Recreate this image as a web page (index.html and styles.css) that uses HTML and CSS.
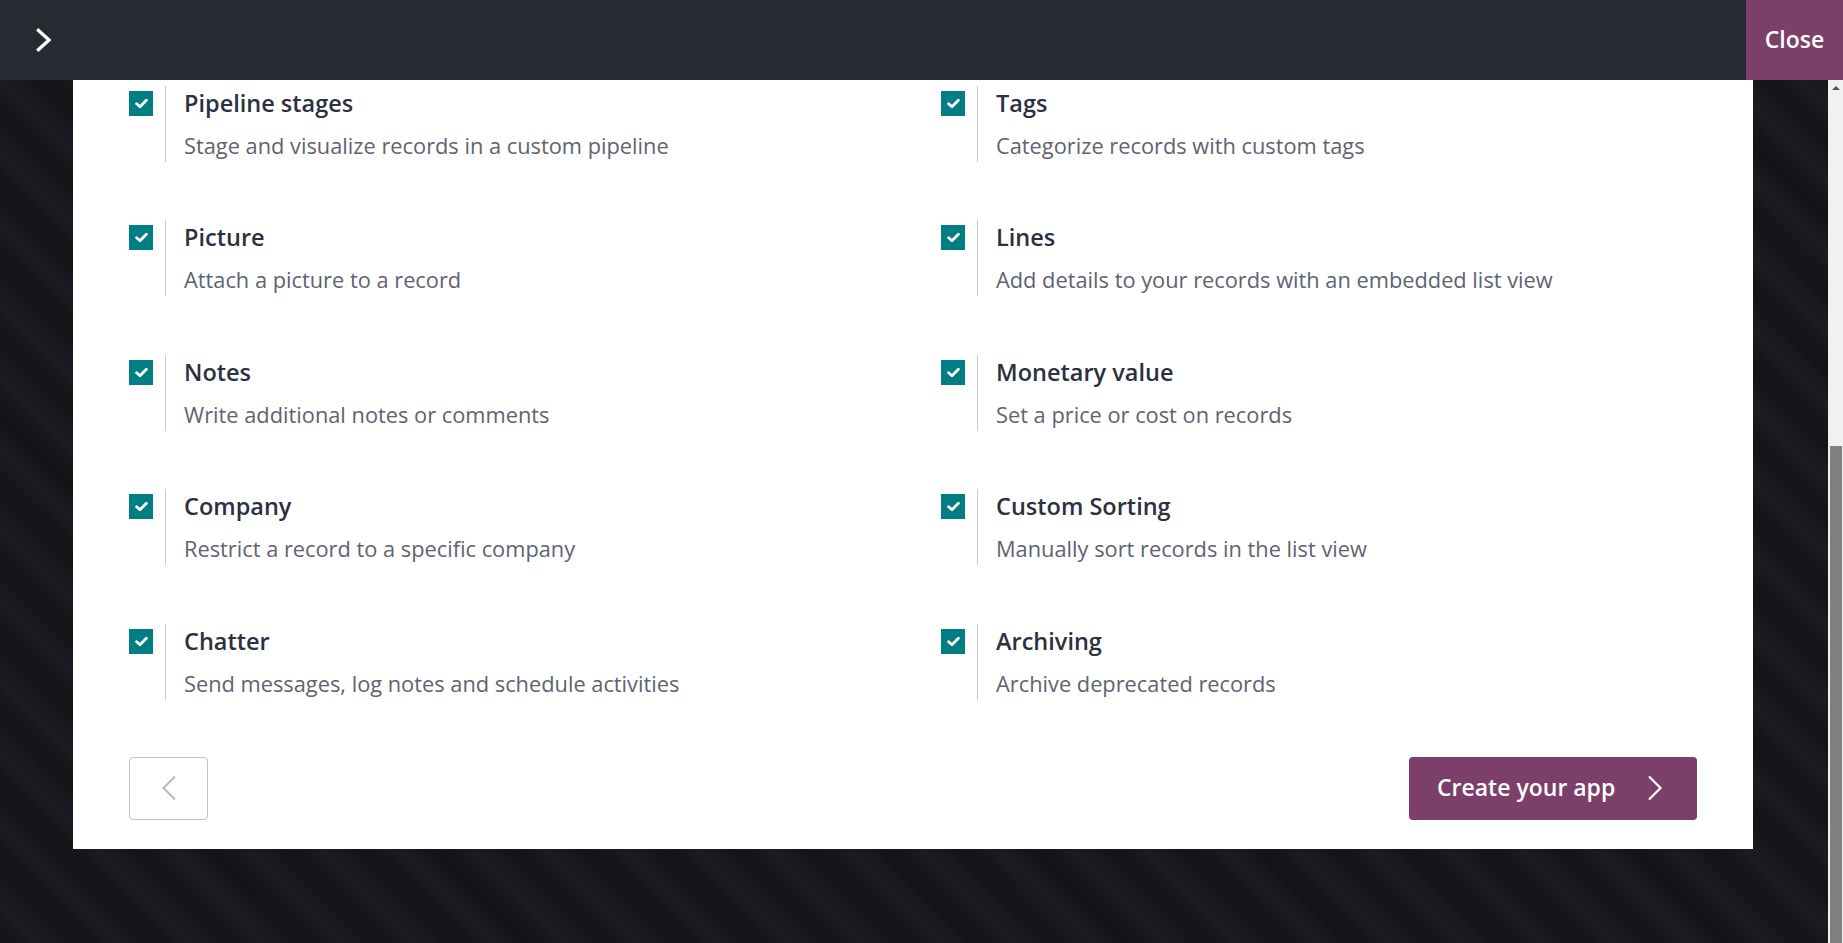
FILE: index.html
```html
<!DOCTYPE html>
<html lang="en">
<head>
<meta charset="utf-8">
<title>Create your app</title>
<link rel="stylesheet" href="styles.css">
</head>
<body>
<header class="topbar">
  <button class="topbar-toggle" aria-label="Expand">
    <svg width="16" height="24" viewBox="0 0 16 24"><path d="M2.5 2.5 L13 12 L2.5 21.5" fill="none" stroke="#fff" stroke-width="3.4" stroke-linecap="square" stroke-linejoin="miter"/></svg>
  </button>
  <button class="close-btn">Close</button>
</header>
<div class="main">
  <div class="stage">
    <section class="panel">
      <div class="features">
        <div class="feature">
          <span class="check"><svg width="13" height="11" viewBox="0 0 12 10"><path d="M1.5 5.2 L4.6 8 L10.5 2" fill="none" stroke="#fff" stroke-width="2.6" stroke-linecap="round" stroke-linejoin="round"/></svg></span>
          <div class="feature-body"><div class="feature-title">Pipeline stages</div><div class="feature-desc">Stage and visualize records in a custom pipeline</div></div>
        </div>
        <div class="feature">
          <span class="check"><svg width="13" height="11" viewBox="0 0 12 10"><path d="M1.5 5.2 L4.6 8 L10.5 2" fill="none" stroke="#fff" stroke-width="2.6" stroke-linecap="round" stroke-linejoin="round"/></svg></span>
          <div class="feature-body"><div class="feature-title">Tags</div><div class="feature-desc">Categorize records with custom tags</div></div>
        </div>
        <div class="feature">
          <span class="check"><svg width="13" height="11" viewBox="0 0 12 10"><path d="M1.5 5.2 L4.6 8 L10.5 2" fill="none" stroke="#fff" stroke-width="2.6" stroke-linecap="round" stroke-linejoin="round"/></svg></span>
          <div class="feature-body"><div class="feature-title">Picture</div><div class="feature-desc">Attach a picture to a record</div></div>
        </div>
        <div class="feature">
          <span class="check"><svg width="13" height="11" viewBox="0 0 12 10"><path d="M1.5 5.2 L4.6 8 L10.5 2" fill="none" stroke="#fff" stroke-width="2.6" stroke-linecap="round" stroke-linejoin="round"/></svg></span>
          <div class="feature-body"><div class="feature-title">Lines</div><div class="feature-desc">Add details to your records with an embedded list view</div></div>
        </div>
        <div class="feature">
          <span class="check"><svg width="13" height="11" viewBox="0 0 12 10"><path d="M1.5 5.2 L4.6 8 L10.5 2" fill="none" stroke="#fff" stroke-width="2.6" stroke-linecap="round" stroke-linejoin="round"/></svg></span>
          <div class="feature-body"><div class="feature-title">Notes</div><div class="feature-desc">Write additional notes or comments</div></div>
        </div>
        <div class="feature">
          <span class="check"><svg width="13" height="11" viewBox="0 0 12 10"><path d="M1.5 5.2 L4.6 8 L10.5 2" fill="none" stroke="#fff" stroke-width="2.6" stroke-linecap="round" stroke-linejoin="round"/></svg></span>
          <div class="feature-body"><div class="feature-title">Monetary value</div><div class="feature-desc">Set a price or cost on records</div></div>
        </div>
        <div class="feature">
          <span class="check"><svg width="13" height="11" viewBox="0 0 12 10"><path d="M1.5 5.2 L4.6 8 L10.5 2" fill="none" stroke="#fff" stroke-width="2.6" stroke-linecap="round" stroke-linejoin="round"/></svg></span>
          <div class="feature-body"><div class="feature-title">Company</div><div class="feature-desc">Restrict a record to a specific company</div></div>
        </div>
        <div class="feature">
          <span class="check"><svg width="13" height="11" viewBox="0 0 12 10"><path d="M1.5 5.2 L4.6 8 L10.5 2" fill="none" stroke="#fff" stroke-width="2.6" stroke-linecap="round" stroke-linejoin="round"/></svg></span>
          <div class="feature-body"><div class="feature-title">Custom Sorting</div><div class="feature-desc">Manually sort records in the list view</div></div>
        </div>
        <div class="feature">
          <span class="check"><svg width="13" height="11" viewBox="0 0 12 10"><path d="M1.5 5.2 L4.6 8 L10.5 2" fill="none" stroke="#fff" stroke-width="2.6" stroke-linecap="round" stroke-linejoin="round"/></svg></span>
          <div class="feature-body"><div class="feature-title">Chatter</div><div class="feature-desc">Send messages, log notes and schedule activities</div></div>
        </div>
        <div class="feature">
          <span class="check"><svg width="13" height="11" viewBox="0 0 12 10"><path d="M1.5 5.2 L4.6 8 L10.5 2" fill="none" stroke="#fff" stroke-width="2.6" stroke-linecap="round" stroke-linejoin="round"/></svg></span>
          <div class="feature-body"><div class="feature-title">Archiving</div><div class="feature-desc">Archive deprecated records</div></div>
        </div>
      </div>
      <div class="panel-footer">
        <button class="btn-back" aria-label="Previous">
          <svg width="16" height="26" viewBox="0 0 16 26"><path d="M14 1.5 L2.5 13 L14 24.5" fill="none" stroke="#b4b8bf" stroke-width="2"/></svg>
        </button>
        <button class="btn-create">Create your app
          <svg width="16" height="26" viewBox="0 0 16 26"><path d="M2 1.5 L13.5 13 L2 24.5" fill="none" stroke="#fff" stroke-width="2.2"/></svg>
        </button>
      </div>
    </section>
  </div>
  <div class="scrollbar">
    <span class="sb-arrow sb-up"></span>
    <span class="sb-track"><span class="sb-thumb"></span></span>
  </div>
</div>
</body>
</html>
```

FILE: styles.css
```css
* { box-sizing: border-box; }
html, body {
  margin: 0;
  height: 100%;
  overflow: hidden;
}
body {
  display: flex;
  flex-direction: column;
  font-family: "Open Sans", "Noto Sans", "DejaVu Sans", sans-serif;
  background: #14151a;
}
button {
  font-family: inherit;
  cursor: pointer;
}
.topbar {
  height: 80px;
  flex: 0 0 80px;
  background: #262a33;
  display: flex;
  align-items: stretch;
  justify-content: space-between;
}
.topbar-toggle {
  background: none;
  border: 0;
  padding: 0 0 0 36px;
  display: flex;
  align-items: center;
}
.close-btn {
  width: 97px;
  background: #7b3f69;
  color: #fff;
  border: 0;
  font-size: 23px;
  font-weight: 600;
  padding: 0 0 2px;
}
.main {
  flex: 1;
  display: flex;
  min-height: 0;
}
.stage {
  flex: 1;
  background: repeating-linear-gradient(45deg, #131418 0px, #15161a 14px, #1b1c21 28px, #191a1f 40px, #131418 53px);
  padding-left: 73px;
}
.panel {
  width: 1680px;
  background: #fff;
  padding: 6px 56px 29px;
}
.features {
  display: grid;
  grid-template-columns: 812px 1fr;
  row-gap: 58.4px;
}
.feature {
  display: flex;
  gap: 12px;
}
.check {
  width: 24px;
  height: 25px;
  margin-top: 5px;
  background: #017e84;
  display: flex;
  align-items: center;
  justify-content: center;
  flex: 0 0 24px;
}
.feature-body {
  border-left: 1px solid #c9cbcf;
  padding: 1px 0 0 18px;
  height: 76px;
}
.feature-title {
  font-size: 23.5px;
  font-weight: 600;
  line-height: 32px;
  color: #2c3040;
  margin-bottom: 11px;
}
.feature-desc {
  font-size: 21.8px;
  line-height: 32px;
  color: #5e6372;
}
.panel-footer {
  margin-top: 57px;
  display: flex;
  justify-content: space-between;
}
.btn-back {
  width: 79px;
  height: 63px;
  background: #fff;
  border: 1px solid #c2c4c8;
  border-radius: 4px;
  display: flex;
  align-items: center;
  justify-content: center;
}
.btn-create {
  width: 288px;
  height: 63px;
  background: #7b3f69;
  border: 0;
  border-radius: 4px;
  color: #fff;
  font-size: 23px;
  font-weight: 600;
  display: flex;
  align-items: center;
  gap: 32px;
  padding: 0 0 2px 28px;
}
.btn-create svg {
  margin-top: 2px;
}
.scrollbar {
  width: 15px;
  flex: 0 0 15px;
  background: #f1f1f1;
  display: flex;
  flex-direction: column;
}
.sb-arrow {
  height: 15px;
  flex: 0 0 15px;
  display: flex;
  align-items: center;
  justify-content: center;
}
.sb-up::before {
  content: "";
  border-left: 4px solid transparent;
  border-right: 4px solid transparent;
  border-bottom: 4px solid #505050;
}
.sb-track {
  flex: 1;
  display: flex;
  flex-direction: column;
  justify-content: flex-end;
  padding: 0 1px 0 2px;
}
.sb-thumb {
  height: 497px;
  background: #7f7f7f;
}
```
